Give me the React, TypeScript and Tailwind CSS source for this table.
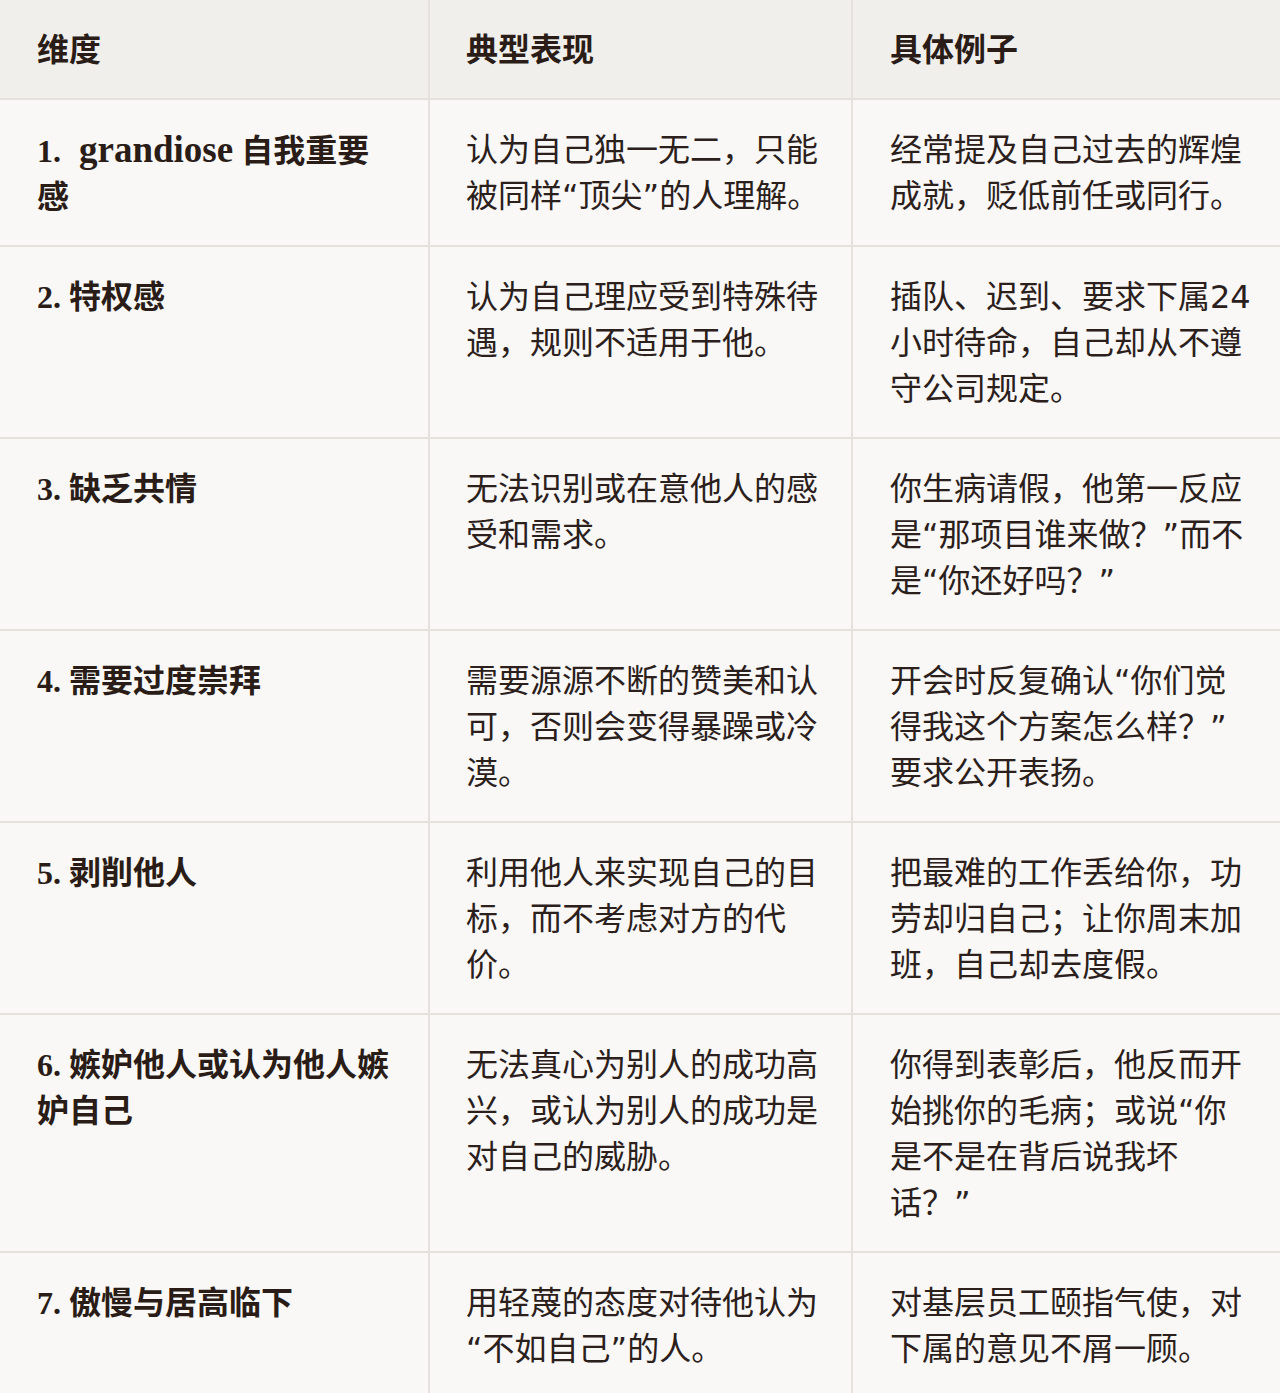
const rows: { num: string; title: React.ReactNode; sign: string; example: string }[] = [
  {
    num: '1.',
    title: (
      <>
        <span className="ml-[10px] text-[37px]">grandiose</span> 自我重要感
      </>
    ),
    sign: '认为自己独一无二，只能被同样“顶尖”的人理解。',
    example: '经常提及自己过去的辉煌成就，贬低前任或同行。',
  },
  {
    num: '2.',
    title: '特权感',
    sign: '认为自己理应受到特殊待遇，规则不适用于他。',
    example: '插队、迟到、要求下属24小时待命，自己却从不遵守公司规定。',
  },
  {
    num: '3.',
    title: '缺乏共情',
    sign: '无法识别或在意他人的感受和需求。',
    example: '你生病请假，他第一反应是“那项目谁来做？”而不是“你还好吗？”',
  },
  {
    num: '4.',
    title: '需要过度崇拜',
    sign: '需要源源不断的赞美和认可，否则会变得暴躁或冷漠。',
    example: '开会时反复确认“你们觉得我这个方案怎么样？”\u200b要求公开表扬。',
  },
  {
    num: '5.',
    title: '剥削他人',
    sign: '利用他人来实现自己的目标，而不考虑对方的代价。',
    example: '把最难的工作丢给你，功劳却归自己；让你周末加班，自己却去度假。',
  },
  {
    num: '6.',
    title: '嫉妒他人或认为他人嫉妒自己',
    sign: '无法真心为别人的成功高兴，或认为别人的成功是对自己的威胁。',
    example: '你得到表彰后，他反而开始挑你的毛病；或说“你是不是在背后说我坏话？”',
  },
  {
    num: '7.',
    title: '傲慢与居高临下',
    sign: '用轻蔑的态度对待他认为\u200b“不如自己”的人。',
    example: '对基层员工颐指气使，对下属的意见不屑一顾。',
  },
];

const cell = 'align-top pt-[27px] pb-[25px] text-[32px] leading-[46px] border-b-2 border-[#e5e2de]';

export default function App() {
  return (
    <div
      className="w-[1280px] bg-[#f9f8f6] text-[#2b201b]"
      style={{ fontFamily: '"DejaVu Sans", "Noto Sans CJK SC", sans-serif' }}
    >
      <table className="w-full table-fixed border-collapse">
        <colgroup>
          <col className="w-[429px]" />
          <col className="w-[423px]" />
          <col className="w-[428px]" />
        </colgroup>
        <thead>
          <tr className="bg-[#f1efec] text-left font-bold text-[#2a1c16]">
            <th className={`${cell} pl-[37px] pr-[34px] border-r-2 font-bold`}>维度</th>
            <th className={`${cell} pl-[36px] pr-[21px] border-r-2 font-bold`}>典型表现</th>
            <th className={`${cell} pl-[37px] pr-[27px] font-bold`}>具体例子</th>
          </tr>
        </thead>
        <tbody>
          {rows.map((r) => (
            <tr key={r.num}>
              <td
                className={`${cell} pl-[37px] pr-[34px] border-r-2 font-bold text-[#2a1c16]`}
                style={{ fontFamily: '"Liberation Serif", "Noto Sans CJK SC", serif' }}
              >
                {r.num} {r.title}
              </td>
              <td className={`${cell} pl-[36px] pr-[21px] border-r-2`}>{r.sign}</td>
              <td className={`${cell} pl-[37px] pr-[27px]`}>{r.example}</td>
            </tr>
          ))}
        </tbody>
      </table>
    </div>
  );
}
